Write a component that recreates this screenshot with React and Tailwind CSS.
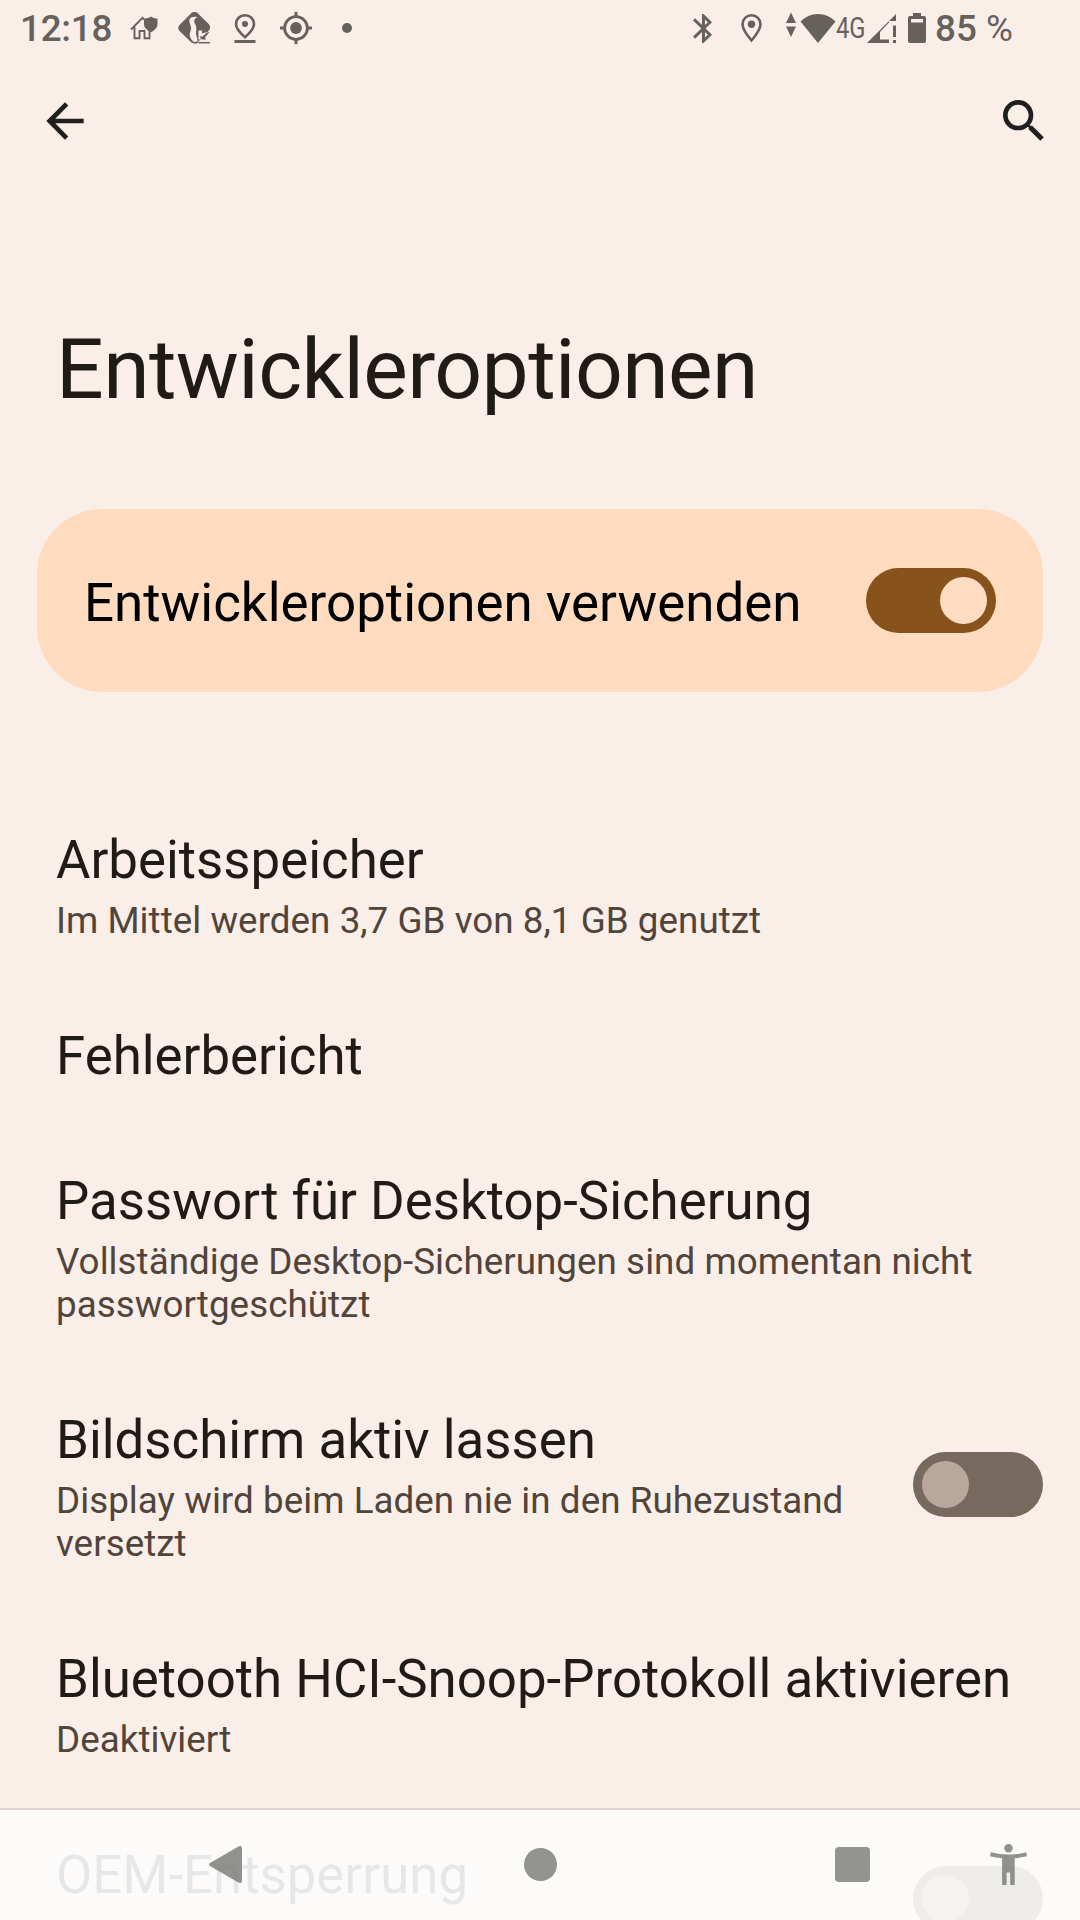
import React from 'react';

const rows = [
  { title: 'Arbeitsspeicher', lines: ['Im Mittel werden 3,7 GB von 8,1 GB genutzt'] },
  { title: 'Fehlerbericht', lines: [] },
  {
    title: 'Passwort für Desktop-Sicherung',
    lines: ['Vollständige Desktop-Sicherungen sind momentan nicht', 'passwortgeschützt'],
  },
  {
    title: 'Bildschirm aktiv lassen',
    lines: ['Display wird beim Laden nie in den Ruhezustand', 'versetzt'],
    toggle: true,
  },
  { title: 'Bluetooth HCI-Snoop-Protokoll aktivieren', lines: ['Deaktiviert'] },
];

const Switch = ({ on }) => (
  <div
    className={`flex h-[65px] w-[130px] shrink-0 items-center rounded-full px-[9px] ${
      on ? 'justify-end bg-[#87521b]' : 'justify-start bg-[#77695d]'
    }`}
  >
    <div className={`h-[47px] w-[47px] rounded-full ${on ? 'bg-[#ffdcc2]' : 'bg-[#b9a79b]'}`} />
  </div>
);

const StatusBar = () => (
  <div className="flex h-14 items-center pl-5 text-[#66615d]">
    <span className="w-[110px] pt-px text-[36.75px] leading-[56px] font-medium tracking-[-0.2px]">12:18</span>
    {/* Home with shield */}
    <svg className="h-8 w-7" viewBox="0 0 28 32" fill="none" stroke="currentColor" strokeWidth="1.9">
      <path d="M1 17.5 12.500 5.800l4 3.800M4.500 15v11.300h5V19h5v7.300h5V18" />
      <path d="M21 4.500c2 1.400 4 2 6.500 2.200v5.500c0 3.400-2.800 6-6.500 8-3.700-2-7-4.600-7-8V6.700c2.300-.2 5-.8 7-2.200z" fill="currentColor" stroke="none" />
    </svg>
    {/* Diamond with road */}
    <svg className="ml-5 h-8 w-8" viewBox="0 0 32 32">
      <path d="M13.500 1q3-2.200 6 0l11.200 11q2.300 2.500.8 5.500L29.500 20l-6 1.500-1.500 8-2.500 1.500q-3 1.500-6-.5L1.500 19q-2.500-3 0-6z" fill="currentColor" />
      <path d="M19.500 5c-4-.8-8 .2-8.200 3.200-.2 2.800 1.700 4.800 1.800 7.800.1 2.800-1.800 4.800-1.400 7.500.4 3 2.300 4.800 4.300 6.500l3.500-.5c.2-3.500-2-6.500-1.500-9.500.4-2.500.8-5-.7-7.500-1.600-2.800-1.500-5.500 2.200-7.500z" fill="#f9eee8" />
      <path d="M20.500 18.500h3.500v3l-2 6h-1.500zM20.500 28.500H32V32H20.500z" fill="#f9eee8" />
      <path d="M24.500 24.500l4.500-4 2.500-.5-4.500 5.500 1 2h-4l-2.500-3z" fill="currentColor" />
      <path d="M20.500 30.700H32" stroke="currentColor" strokeWidth="1.500" />
    </svg>
    <svg className="ml-6 h-8 w-[22px]" viewBox="0 0 22 32">
      <path d="M11 3.200c-5.200 0-9 3.800-9 8.800 0 4.600 3.900 8.800 9 13.200 5.100-4.400 9-8.600 9-13.200 0-5-3.800-8.800-9-8.800z" fill="none" stroke="currentColor" strokeWidth="2.600" />
      <circle cx="11" cy="12" r="3" fill="currentColor" />
      <path d="M.5 29.500h21" stroke="currentColor" strokeWidth="3" />
    </svg>
    <svg className="ml-6 h-8 w-8" viewBox="0 0 32 32" fill="none" stroke="currentColor">
      <circle cx="16" cy="16" r="11.400" strokeWidth="2.800" />
      <circle cx="16" cy="16" r="5.900" fill="currentColor" stroke="none" />
      <path d="M16 0v5M16 27v5M0 16h5M27 16h5" strokeWidth="3" />
    </svg>
    <div className="ml-[30px] h-2.5 w-2.5 rounded-full bg-[#66615d]" />

    <svg className="ml-[341px] h-[29px] w-[19px]" viewBox="5 2 12.700 20" preserveAspectRatio="none" fill="currentColor">
      <path d="M17.710 7.710L12 2h-1v7.590L6.410 5 5 6.410 10.590 12 5 17.590 6.410 19 11 14.410V22h1l5.710-5.710-4.300-4.290 4.300-4.290zM13 5.830l1.880 1.880L13 9.590V5.830zm1.880 10.460L13 18.170v-3.760l1.880 1.880z" />
    </svg>
    <svg className="ml-[29px] h-[29px] w-[21px]" viewBox="0 0 21 29">
      <path d="M10.500 1.300c-5 0-9 3.900-9 8.900 0 4.800 4 10.300 9 16.300 5-6 9-11.500 9-16.300 0-5-4-8.900-9-8.900z" fill="none" stroke="currentColor" strokeWidth="2.600" />
      <circle cx="10.500" cy="10.200" r="3.700" fill="currentColor" />
    </svg>
    <svg className="ml-[24px] h-8 w-[10px]" viewBox="0 0 10 32" fill="currentColor">
      <path d="M5 .5l5 10.500H0zM0 14.500h10L5 25z" />
    </svg>
    <svg className="ml-1 h-[29px] w-[36px]" viewBox="0 0 36 29" fill="currentColor">
      <path d="M18 29L.5 7.500C5 3 11 0 18 0s13 3 17.500 7.500z" />
    </svg>
    <span className="w-8 origin-left scale-x-[0.82] text-[29px] leading-8">4G</span>
    <svg className="-ml-px h-[29px] w-[29px]" viewBox="0 0 29 29" fill="currentColor">
      <path d="M29 0v7h-7zM22 7v1.500L13 18v7.500h9V29H0z" />
      <path d="M26 11.500h3v11.500h-3zM26 26h3v3h-3z" />
    </svg>
    <svg className="ml-3 h-[30px] w-[18px]" viewBox="0 0 18 30" fill="currentColor" fillRule="evenodd">
      <path d="M5 0h8v3h3q2 0 2 2v23q0 2-2 2H2q-2 0-2-2V5q0-2 2-2h3zM3 6v3.500h12V6z" />
    </svg>
    <span className="ml-[9px] pt-px text-[36.75px] leading-[56px] font-medium whitespace-nowrap">
      85 <span className="font-normal">%</span>
    </span>
  </div>
);

const ActionBar = () => (
  <div className="flex h-[130px] items-center justify-between px-[37px] text-[#1f1f1d]">
    <svg className="h-14 w-14" viewBox="0 0 24 24" fill="currentColor">
      <path d="M20 11H7.830l5.590-5.590L12 4l-8 8 8 8 1.410-1.410L7.830 13H20v-2z" />
    </svg>
    <svg className="-mr-[9px] h-14 w-14" viewBox="0 0 24 24" fill="currentColor">
      <path d="M15.500 14h-.790l-.280-.270A6.471 6.471 0 0 0 16 9.500 6.500 6.500 0 1 0 9.500 16c1.610 0 3.090-.590 4.230-1.570l.270.280v.790l5 4.990L20.490 19l-4.990-5zm-6 0C7.010 14 5 11.990 5 9.500S7.010 5 9.500 5 14 7.010 14 9.500 11.990 14 9.500 14z" />
    </svg>
  </div>
);

const Row = ({ title, lines, toggle, faded }) => (
  <div className="flex items-center justify-between pt-[41px] pr-[37px] pb-[42px] pl-14">
    <div className="flex flex-col gap-2 whitespace-nowrap">
      <h2 className={`text-[52.8px] leading-[62px] ${faded ? 'text-[#2b2f46]' : 'text-[#201b16]'}`}>{title}</h2>
      {lines.length > 0 && (
        <p className="text-[36.75px] leading-[43px] tracking-[0.05px] text-[#51443a]">
          {lines.map((line) => (
            <span key={line} className="block">
              {line}
            </span>
          ))}
        </p>
      )}
    </div>
    {toggle && (
      <div className={faded ? '-mt-1' : '-mt-1.5'}>
        <Switch />
      </div>
    )}
  </div>
);

const NavBar = () => (
  <div className="absolute inset-x-0 bottom-0 h-28 border-t-2 border-[#ddd2cd] bg-[#fcfcfb]/90">
    <div className="flex h-[110px] items-start pt-[34px] pl-[209px] text-[#939391]">
      <svg className="mt-0.5 h-[37px] w-[33px]" viewBox="0 0 33 37" fill="#7f7f7d" fillOpacity="0.86">
        <path d="M29.500.4q3.500-1.400 3.500 2v32.200q0 3.400-3.500 2L1 20q-2-1.500 0-3z" />
      </svg>
      <div className="mt-1 ml-[282px] h-[33px] w-[33px] rounded-full bg-[#939391]" />
      <div className="mt-[3px] ml-[278px] h-[35px] w-[35px] rounded bg-[#939391]" />
      <svg className="ml-[120px] h-[41px] w-[37px]" viewBox="0 0 37 41" fill="#7f7f7d" fillOpacity="0.86">
        <circle cx="18.500" cy="4.200" r="4.200" />
        <path d="M.8 8.300q17.700 4.600 35.400 0l.8 4q-6 1.400-12.300 2V41h-4.500V28.500h-3.600V41h-4.500V14.300Q6 13.700 0 12.300z" />
      </svg>
    </div>
  </div>
);

const App = () => {
  return (
    <div className="relative h-[1920px] w-[1080px] overflow-hidden bg-[#f9eee8] font-['Roboto',sans-serif]">
      <StatusBar />
      <ActionBar />
      <h1 className="mt-[135px] pl-14 text-[84px] leading-[98px] tracking-[-0.6px] text-[#201b16]">Entwickleroptionen</h1>

      <div className="mx-[37px] mt-[90px] flex h-[183px] items-center justify-between rounded-[65px] bg-[#ffdbc0] px-[47px]">
        <span className="pt-[5px] text-[52.9px] leading-[62px] whitespace-nowrap text-black">Entwickleroptionen verwenden</span>
        <Switch on />
      </div>

      <div className="mt-24">
        {rows.map((row) => (
          <Row key={row.title} {...row} />
        ))}
        {/* Cut off by the navigation bar */}
        <Row title="OEM-Entsperrung" lines={['\u00a0']} toggle faded />
      </div>

      <NavBar />
    </div>
  );
};

export default App;
